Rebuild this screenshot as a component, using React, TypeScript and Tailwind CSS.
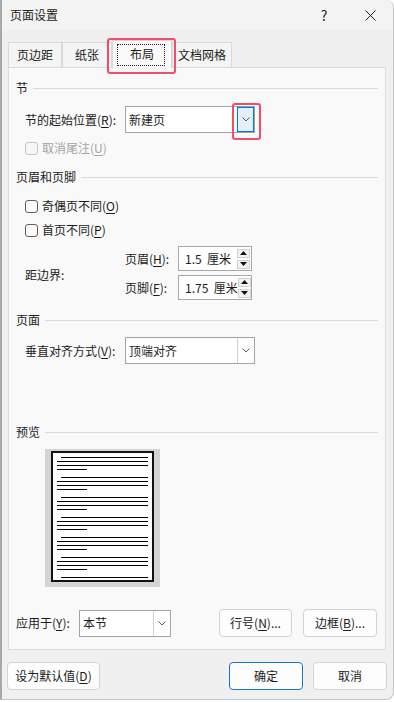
import React from 'react'

const Mn = ({ children }: { children: React.ReactNode }) => (
  <span className="underline underline-offset-[2px] decoration-[1px]">{children}</span>
)

const Chevron = () => (
  <svg width="8" height="5" viewBox="0 0 8 5">
    <polyline points="0.5,0.5 4,4 7.5,0.5" fill="none" stroke="#5c5c5c" strokeWidth="1" />
  </svg>
)

const Tri = ({ up }: { up?: boolean }) => (
  <svg width="7" height="4" viewBox="0 0 7 4">
    <polygon points={up ? '0,4 3.5,0 7,4' : '0,0 3.5,4 7,0'} fill="#111" />
  </svg>
)

const Header = ({ label, className = '' }: { label: string; className?: string }) => (
  <div className={`flex items-center h-[16px] pl-[7px] pr-[7px] ${className}`}>
    <span>{label}</span>
    <div className="flex-1 h-px bg-[#dadada] ml-[5px]" />
  </div>
)

const Checkbox = ({ disabled }: { disabled?: boolean }) => (
  <span
    className={`w-[13px] h-[13px] rounded-[3px] border ${
      disabled ? 'border-[#c6c6c6] bg-[#f7f7f7]' : 'border-[#5f5f5f] bg-[#fbfbfb]'
    }`}
  />
)

const Dropdown = ({ text, className, focused }: { text: string; className: string; focused?: boolean }) => (
  <div className={`relative h-[27px] bg-white border border-[#a3a3a3] flex ${className}`}>
    <span className="flex-1 pl-[3px] flex items-center">{text}</span>
    {focused ? (
      <div className="w-[17px] h-full border border-[#0078d4] bg-[#e3effa] flex items-center justify-center">
        <Chevron />
      </div>
    ) : (
      <div className="w-[17px] h-full border-l border-[#cfcfcf] flex items-center justify-center">
        <Chevron />
      </div>
    )}
    {focused && (
      <div className="absolute left-[106px] top-[-4px] w-[29px] h-[37px] border-2 border-[#ef4f6d] rounded-[3px]" />
    )}
  </div>
)

const SpinBox = ({ value }: { value: string }) => (
  <div className="w-[74px] h-[25px] bg-white border border-[#a8a8a8] flex items-center">
    <span className="flex-1 pl-[6px] whitespace-pre">{value}</span>
    <div className="flex flex-col gap-[2px] pr-[1px]">
      <div className="w-[13px] h-[9px] border border-[#cfcfcf] bg-[#f3f3f3] flex items-center justify-center">
        <Tri up />
      </div>
      <div className="w-[13px] h-[9px] border border-[#cfcfcf] bg-[#f3f3f3] flex items-center justify-center">
        <Tri />
      </div>
    </div>
  </div>
)

const Button = ({ children, className = '', primary }: { children: React.ReactNode; className?: string; primary?: boolean }) => (
  <div
    className={`h-[28px] rounded-[4px] border bg-[#fdfdfd] flex items-center justify-center ${
      primary ? 'border-[#1a73c8]' : 'border-[#d3d3d3]'
    } ${className}`}
  >
    {children}
  </div>
)

const Paragraph = ({ last }: { last?: boolean }) => (
  <div className="flex flex-col gap-[3px]">
    <div className="ml-[4px] w-[87px] h-px bg-black" />
    {!last && (
      <>
        <div className="w-[91px] h-px bg-black" />
        <div className="w-[91px] h-px bg-black" />
        <div className="w-[30px] h-px bg-black" />
      </>
    )}
  </div>
)

const tabs = [
  { label: '页边距', w: 'w-[54px]' },
  { label: '纸张', w: 'w-[50px]' },
  { label: '布局', w: 'w-[60px]', active: true },
  { label: '文档网格', w: 'w-[60px]' },
]

export default function App() {
  return (
    <div className="w-[394px] h-[702px] bg-white font-['Noto_Sans_CJK_SC',sans-serif] text-[12px] leading-[16px] text-[#1b1b1b]">
      <div className="w-[394px] h-[700px] bg-[#f0f0f0] border-l-2 border-l-[#a9a9a9] border-r border-b border-[#c4c4c4] rounded-tr-[8px] rounded-br-[8px] overflow-hidden">
        {/* title bar */}
        <div className="h-[30px] bg-[#f3f3f3] flex items-center pl-[8px]">
          <span>页面设置</span>
          <div className="ml-auto flex items-center">
            <span className="w-[46px] text-center text-[14px]">?</span>
            <span className="w-[46px] flex justify-center">
              <svg width="11" height="11" viewBox="0 0 11 11">
                <path d="M0.5 0.5 L10.5 10.5 M10.5 0.5 L0.5 10.5" stroke="#1b1b1b" strokeWidth="1" />
              </svg>
            </span>
          </div>
        </div>

        {/* tabs */}
        <div className="h-[37px] flex items-end pl-[6px]">
          {tabs.map((t) =>
            t.active ? (
              <div
                key={t.label}
                className={`relative z-10 ${t.w} h-[28px] mb-[-1px] bg-[#f9f9f9] border border-b-0 border-[#d6d6d6] flex items-center justify-center`}
              >
                <div className="absolute left-[4px] top-[3px] w-[48px] h-[22px] border border-dotted border-[#222]" />
                <span className="pb-[1px]">{t.label}</span>
                <div className="absolute left-[-6px] top-[-3px] w-[69px] h-[36px] border-2 border-[#ef4f6d] rounded-[3px]" />
              </div>
            ) : (
              <div
                key={t.label}
                className={`${t.w} h-[25px] bg-[#f4f4f4] border border-b-0 border-[#d9d9d9] flex items-center justify-center`}
              >
                {t.label}
              </div>
            )
          )}
        </div>

        {/* panel */}
        <div className="ml-[6px] w-[378px] h-[583px] border border-[#dcdcdc] bg-[#f9f9f9] flex flex-col">
          <Header label="节" className="mt-[12px]" />
          <div className="mt-[10px] pl-[16px] flex items-center">
            <span className="w-[100px]">
              节的起始位置(<Mn>R</Mn>):
            </span>
            <Dropdown text="新建页" className="w-[130px]" focused />
          </div>
          <div className="mt-[7px] pl-[16px] flex items-center gap-[4px] h-[16px] text-[#a3a3a3]">
            <Checkbox disabled />
            <span>
              取消尾注(<Mn>U</Mn>)
            </span>
          </div>

          <Header label="页眉和页脚" className="mt-[13px]" />
          <div className="mt-[13px] pl-[16px] flex items-center gap-[4px] h-[16px]">
            <Checkbox />
            <span>
              奇偶页不同(<Mn>O</Mn>)
            </span>
          </div>
          <div className="mt-[8px] pl-[16px] flex items-center gap-[4px] h-[16px]">
            <Checkbox />
            <span>
              首页不同(<Mn>P</Mn>)
            </span>
          </div>
          <div className="mt-[8px] pl-[16px] flex">
            <div className="w-[100px] flex items-center pt-[3px]">距边界:</div>
            <div className="flex flex-col gap-[4px]">
              <div className="flex items-center">
                <span className="w-[53px]">
                  页眉(<Mn>H</Mn>):
                </span>
                <SpinBox value="1.5  厘米" />
              </div>
              <div className="flex items-center">
                <span className="w-[53px]">
                  页脚(<Mn>F</Mn>):
                </span>
                <SpinBox value="1.75  厘米" />
              </div>
            </div>
          </div>

          <Header label="页面" className="mt-[12px]" />
          <div className="mt-[9px] pl-[16px] flex items-center">
            <span className="w-[100px]">
              垂直对齐方式(<Mn>V</Mn>):
            </span>
            <Dropdown text="顶端对齐" className="w-[130px]" />
          </div>

          <Header label="预览" className="mt-[60px]" />
          <div className="mt-[9px] ml-[36px] w-[115px] h-[138px] bg-[#d4d4d4] flex justify-center pt-[2px]">
            <div className="w-[103px] h-[131px] bg-white border-2 border-[#111] pt-[4px] pl-[4px] flex flex-col gap-[7px]">
              <Paragraph />
              <Paragraph />
              <Paragraph />
              <Paragraph />
              <Paragraph />
              <Paragraph />
              <Paragraph last />
            </div>
          </div>

          <div className="mt-[22px] pl-[7px] pr-[8px] flex items-center">
            <span className="w-[63px]">
              应用于(<Mn>Y</Mn>):
            </span>
            <Dropdown text="本节" className="w-[92px]" />
            <div className="ml-auto flex gap-[11px]">
              <Button className="w-[73px]">
                行号(<Mn>N</Mn>)...
              </Button>
              <Button className="w-[74px]">
                边框(<Mn>B</Mn>)...
              </Button>
            </div>
          </div>
        </div>

        {/* bottom buttons */}
        <div className="mt-[12px] pl-[5px] pr-[6px] flex">
          <Button className="w-[93px]">
            设为默认值(<Mn>D</Mn>)
          </Button>
          <div className="ml-auto flex gap-[10px]">
            <Button className="w-[74px]" primary>
              确定
            </Button>
            <Button className="w-[74px]">取消</Button>
          </div>
        </div>
      </div>
    </div>
  )
}
